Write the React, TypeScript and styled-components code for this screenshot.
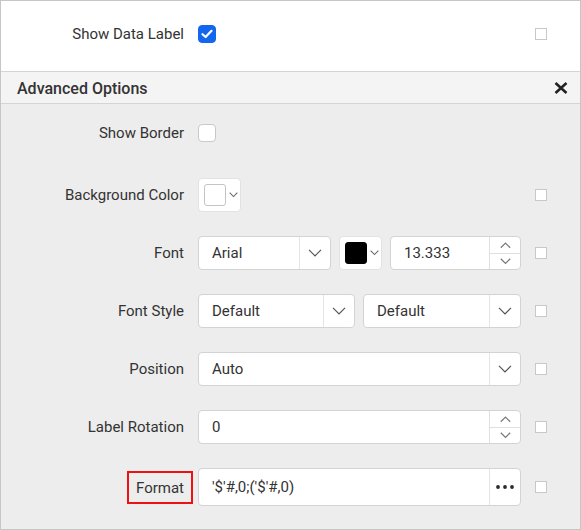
import React from 'react';
import styled, {createGlobalStyle} from 'styled-components';

const GlobalStyle = createGlobalStyle`
  html, body {
    margin: 0;
    padding: 0;
    background: #ffffff;
  }
  body {
    font-family: Roboto, "Noto Sans", "Liberation Sans", sans-serif;
    color: #333333;
  }
`

const Panel = styled.div`
  width: 581px;
  height: 530px;
  box-sizing: border-box;
  border: 1px solid #c6c6c6;
  display: flex;
  flex-direction: column;
  background: #ededed;
`

const TopSection = styled.div`
  height: 71px;
  flex-shrink: 0;
  box-sizing: border-box;
  padding-top: 16px;
  background: #ffffff;
  border-bottom: 1px solid #d4d4d4;
`

const Header = styled.div`
  height: 32px;
  flex-shrink: 0;
  box-sizing: border-box;
  display: flex;
  align-items: center;
  justify-content: space-between;
  padding: 1px 12px 0 16px;
  background: #f4f4f4;
  border-bottom: 1px solid #d4d4d4;
  font-size: 16px;
  font-weight: 500;
  color: #333333;
`

const Body = styled.div`
  display: flex;
  flex-direction: column;
  gap: 24px;
  padding-top: 12px;
`

const Row = styled.div<{$extraGap?: number, $height?: number}>`
  display: flex;
  align-items: center;
  height: ${props => props.$height || 34}px;
  margin-bottom: ${props => props.$extraGap || 0}px;
`

const Label = styled.div<{$pad?: number}>`
  width: 197px;
  box-sizing: border-box;
  padding-right: ${props => props.$pad ?? 14}px;
  text-align: right;
  font-size: 15px;
  color: #333333;
  white-space: nowrap;
`

const Highlight = styled.span`
  display: inline-block;
  padding: 6px 7px 5px;
  border: 2px solid #ee1111;
`

const Controls = styled.div`
  width: 323px;
  display: flex;
  align-items: center;
  gap: 8px;
  height: 100%;
`

const Check = styled.div<{$checked?: boolean}>`
  width: 18px;
  height: 18px;
  box-sizing: border-box;
  border-radius: 4px;
  border: 1px solid ${props => props.$checked ? '#1366ee' : '#c9c9c9'};
  background: ${props => props.$checked ? '#1366ee' : '#ffffff'};
  display: flex;
  align-items: center;
  justify-content: center;
`

const SideCheck = styled.div`
  width: 12px;
  height: 12px;
  box-sizing: border-box;
  margin-left: 14px;
  border: 1px solid #c8c8c8;
  background: #ffffff;
`

const Field = styled.div<{$width?: number}>`
  ${props => props.$width ? `width: ${props.$width}px;` : 'flex: 1;'}
  height: 100%;
  box-sizing: border-box;
  display: flex;
  background: #ffffff;
  border: 1px solid #d3d3d3;
  border-radius: 4px;
  overflow: hidden;
`

const FieldText = styled.div`
  flex: 1;
  display: flex;
  align-items: center;
  padding-left: 13px;
  font-size: 15px;
  color: #333333;
  white-space: nowrap;
`

const FieldButton = styled.div`
  width: 30px;
  border-left: 1px solid #e4e4e4;
  display: flex;
  align-items: center;
  justify-content: center;
`

const Spinner = styled.div`
  width: 30px;
  border-left: 1px solid #e0e0e0;
  display: flex;
  flex-direction: column;
`

const SpinHalf = styled.div`
  flex: 1;
  display: flex;
  align-items: center;
  justify-content: center;
  & + & {
    border-top: 1px solid #e0e0e0;
  }
`

const ColorPicker = styled.div`
  width: 43px;
  height: 34px;
  flex-shrink: 0;
  box-sizing: border-box;
  display: flex;
  align-items: center;
  gap: 3px;
  padding-left: 5px;
  background: #ffffff;
  border: 1px solid #e2e2e2;
  border-radius: 4px;
`

const Swatch = styled.div<{$color: string}>`
  width: 22px;
  height: 22px;
  box-sizing: border-box;
  border-radius: 3px;
  background: ${props => props.$color};
  border: 1px solid ${props => props.$color === '#000000' ? '#000000' : '#c4c4c4'};
`

const Chevron = ({size = 14, color = '#555555', up = false}: {size?: number, color?: string, up?: boolean}) => (
    <svg width={size} height={size / 2 + 1} viewBox="0 0 14 8" fill="none">
        <path d={up ? 'M1 7.2 L7 1.2 L13 7.2' : 'M1 0.8 L7 6.8 L13 0.8'} stroke={color} strokeWidth={size < 12 ? 1.6 : 1.2}/>
    </svg>
)

const Tick = () => (
    <svg width="12" height="10" viewBox="0 0 12 10" fill="none">
        <path d="M1.5 5.2 L4.6 8 L10.5 1.8" stroke="#ffffff" strokeWidth="2.2" strokeLinecap="round" strokeLinejoin="round"/>
    </svg>
)

const CloseIcon = () => (
    <svg width="14" height="12" viewBox="0 0 14 12" fill="none">
        <path d="M1.5 1 L12.5 11 M12.5 1 L1.5 11" stroke="#222222" strokeWidth="2.6"/>
    </svg>
)

const Dots = () => (
    <svg width="18" height="4" viewBox="0 0 18 4">
        {[2, 9, 16].map(cx => <circle key={cx} cx={cx} cy="2" r="1.9" fill="#2a2a2a"/>)}
    </svg>
)

const Dropdown = ({value, width}: {value: string, width?: number}) => (
    <Field $width={width}>
        <FieldText>{value}</FieldText>
        <FieldButton><Chevron/></FieldButton>
    </Field>
)

const Numeric = ({value, width}: {value: string, width?: number}) => (
    <Field $width={width}>
        <FieldText>{value}</FieldText>
        <Spinner>
            <SpinHalf><Chevron size={11} color="#7a7a7a" up/></SpinHalf>
            <SpinHalf><Chevron size={11} color="#7a7a7a"/></SpinHalf>
        </Spinner>
    </Field>
)

const Color = ({color}: {color: string}) => (
    <ColorPicker>
        <Swatch $color={color}/>
        <Chevron size={9} color="#666666"/>
    </ColorPicker>
)

const App = () => {
    return (
        <>
            <GlobalStyle/>
            <Panel>
                <TopSection>
                    <Row>
                        <Label>Show Data Label</Label>
                        <Controls><Check $checked><Tick/></Check></Controls>
                        <SideCheck/>
                    </Row>
                </TopSection>
                <Header>
                    <span>Advanced Options</span>
                    <CloseIcon/>
                </Header>
                <Body>
                    <Row $extraGap={4}>
                        <Label>Show Border</Label>
                        <Controls><Check/></Controls>
                    </Row>
                    <Row>
                        <Label>Background Color</Label>
                        <Controls><Color color="#ffffff"/></Controls>
                        <SideCheck/>
                    </Row>
                    <Row>
                        <Label>Font</Label>
                        <Controls>
                            <Dropdown value="Arial" width={133}/>
                            <Color color="#000000"/>
                            <Numeric value="13.333"/>
                        </Controls>
                        <SideCheck/>
                    </Row>
                    <Row>
                        <Label>Font Style</Label>
                        <Controls>
                            <Dropdown value="Default" width={157}/>
                            <Dropdown value="Default"/>
                        </Controls>
                        <SideCheck/>
                    </Row>
                    <Row>
                        <Label>Position</Label>
                        <Controls><Dropdown value="Auto"/></Controls>
                        <SideCheck/>
                    </Row>
                    <Row>
                        <Label>Label Rotation</Label>
                        <Controls><Numeric value="0"/></Controls>
                        <SideCheck/>
                    </Row>
                    <Row $height={38}>
                        <Label $pad={5}><Highlight>Format</Highlight></Label>
                        <Controls>
                            <Field>
                                <FieldText>'$'#,0;('$'#,0)</FieldText>
                                <FieldButton><Dots/></FieldButton>
                            </Field>
                        </Controls>
                        <SideCheck/>
                    </Row>
                </Body>
            </Panel>
        </>
    )
}

export default App
